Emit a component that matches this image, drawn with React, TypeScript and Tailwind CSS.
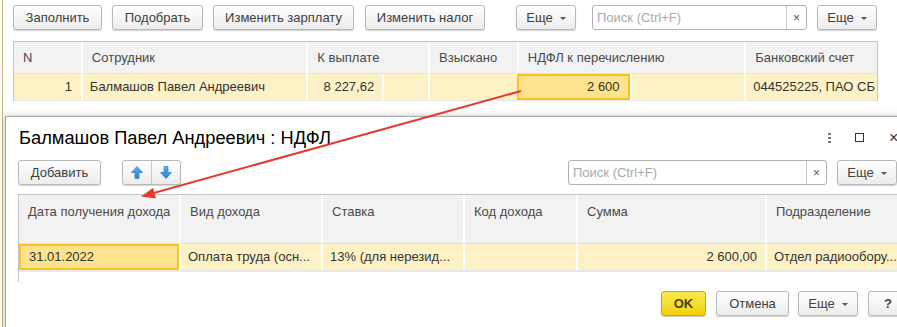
import React from "react";

const F = { fontFamily: '"Liberation Sans", Arial, sans-serif' };

function Btn({ children, className = "" }: { children: React.ReactNode; className?: string }) {
  return (
    <div
      className={
        "h-[25px] flex items-center justify-center rounded-[3px] border border-[#b8b8b8] bg-gradient-to-b from-white to-[#ececec] shadow-[0_1px_1px_rgba(0,0,0,0.18)] text-[13px] text-[#404040] " +
        className
      }
    >
      {children}
    </div>
  );
}

function More({ className = "" }: { className?: string }) {
  return (
    <Btn className={"gap-[7px] " + className}>
      <span>Еще</span>
      <span className="w-0 h-0 border-l-[3px] border-r-[3px] border-t-[3px] border-l-transparent border-r-transparent border-t-[#555] mt-[1px]" />
    </Btn>
  );
}

function Search({ className = "" }: { className?: string }) {
  return (
    <div className={"h-[25px] flex rounded-[3px] border border-[#b0b0b0] bg-white " + className}>
      <div className="flex-1 flex items-center pl-[4px] text-[13px] text-[#a8a8a8]">Поиск (Ctrl+F)</div>
      <div className="w-[20px] border-l border-[#c8c8c8] flex items-center justify-center text-[12px] text-[#555]">×</div>
    </div>
  );
}

function Arrow({ up }: { up?: boolean }) {
  return (
    <svg width="12" height="13" viewBox="0 0 12 13">
      <defs>
        <linearGradient id={up ? "gu" : "gd"} x1="0" y1="0" x2="0" y2="1">
          <stop offset="0" stopColor="#5fb0ee" />
          <stop offset="1" stopColor="#2b7fcf" />
        </linearGradient>
      </defs>
      <polygon
        points={up ? "6,0.5 11.5,6.5 8,6.5 8,12.5 4,12.5 4,6.5 0.5,6.5" : "6,12.5 11.5,6.5 8,6.5 8,0.5 4,0.5 4,6.5 0.5,6.5"}
        fill={`url(#${up ? "gu" : "gd"})`}
        stroke="#2a6fb5"
        strokeWidth="0.6"
      />
    </svg>
  );
}

export default function App() {
  return (
    <div className="relative w-[897px] h-[327px] overflow-hidden bg-white flex" style={F}>
      <div className="w-[2px] shrink-0" />
      <div className="w-px shrink-0 bg-[#c9b378]" />
      {/* background form */}
      <div className="flex-1 pl-[10px] pt-[5px]">
        <div className="flex items-center">
          <Btn className="w-[89px]">Заполнить</Btn>
          <Btn className="w-[91px] ml-[10px]">Подобрать</Btn>
          <Btn className="w-[141px] ml-[10px]">Изменить зарплату</Btn>
          <Btn className="w-[120px] ml-[11px]">Изменить налог</Btn>
          <More className="w-[60px] ml-[31px]" />
          <Search className="w-[215px] ml-[16px]" />
          <More className="w-[60px] ml-[10px]" />
        </div>
        <div className="mt-[11px] w-[865px] border-l border-r border-t border-[#c4c4c4] text-[13px]">
          <div className="flex h-[31px] bg-[#f2f2f2] text-[#4a4a4a]">
            {[
              ["N", 67],
              ["Сотрудник", 226],
              ["К выплате", 122],
              ["Взыскано", 89],
              ["НДФЛ к перечислению", 228],
              ["Банковский счет", 133],
            ].map(([t, w], i) => (
              <div
                key={i}
                className={"flex items-center pl-[9px] whitespace-nowrap overflow-hidden " + (i > 0 ? "border-l-2 border-white" : "")}
                style={{ width: w as number }}
              >
                {t}
              </div>
            ))}
          </div>
          <div className="flex h-[28px] text-[#333] border-t border-[#e4e4e4] border-b border-b-[#e4e4e4]">
            <div className="w-[67px] bg-[#fdf2c6] flex items-center justify-end pr-[9px]">1</div>
            <div className="w-[226px] bg-[#fdf2c6] border-l-2 border-white flex items-center pl-[7px]">Балмашов Павел Андреевич</div>
            <div className="w-[76px] bg-[#fdf2c6] border-l-2 border-white flex items-center justify-end pr-[8px]">8 227,62</div>
            <div className="w-[46px] bg-[#fdf2c6] border-l-2 border-white" />
            <div className="w-[89px] bg-[#fdf2c6] border-l-2 border-white" />
            <div className="w-[113px] bg-[#fde38d] border-2 border-[#f7c51e] flex items-center justify-end pr-[8px]">2 600</div>
            <div className="w-[115px] bg-[#fdf2c6] border-l-2 border-white" />
            <div className="w-[133px] bg-[#fdf2c6] border-l-2 border-white flex items-center pl-[7px] whitespace-nowrap overflow-hidden">044525225, ПАО СБ</div>
          </div>
        </div>
      </div>

      {/* dialog window */}
      <div className="absolute left-[5px] top-[116px] w-[920px] h-[240px] bg-white border border-[#a8a8a8] shadow-[0_0_6px_rgba(0,0,0,0.25)] flex flex-col">
        <div className="flex items-center h-[36px] pt-[5px]">
          <div className="pl-[13px] text-[18.3px] text-black whitespace-nowrap">Балмашов Павел Андреевич : НДФЛ</div>
          <div className="flex-1" />
          <div className="flex flex-col gap-[2px] mr-[24px]">
            <span className="w-[3px] h-[2px] bg-[#777]" />
            <span className="w-[3px] h-[2px] bg-[#777]" />
            <span className="w-[3px] h-[2px] bg-[#777]" />
          </div>
          <div className="w-[9px] h-[9px] border border-[#333] mr-[25px]" />
          <div className="text-[16px] text-[#333] w-[35px]">×</div>
        </div>
        <div className="flex items-center mt-[7px] pl-[12px]">
          <Btn className="w-[83px]">Добавить</Btn>
          <div className="ml-[21px] h-[25px] w-[59px] flex rounded-[3px] border border-[#b8b8b8] bg-gradient-to-b from-white to-[#ececec] shadow-[0_1px_1px_rgba(0,0,0,0.18)]">
            <div className="flex-1 flex items-center justify-center border-r border-[#c8c8c8]">
              <Arrow up />
            </div>
            <div className="flex-1 flex items-center justify-center">
              <Arrow />
            </div>
          </div>
          <Search className="w-[259px] ml-[387px]" />
          <More className="w-[60px] ml-[10px]" />
        </div>
        <div className="ml-[12px] mt-[9px] w-[900px] h-[88px] border-l border-t border-[#c4c4c4] text-[13px]">
          <div className="flex h-[48px] bg-[#f2f2f2] text-[#4a4a4a]">
            {[
              ["Дата получения дохода", 160],
              ["Вид дохода", 142],
              ["Ставка", 142],
              ["Код дохода", 113],
              ["Сумма", 189],
              ["Подразделение", 150],
            ].map(([t, w], i) => (
              <div
                key={i}
                className={"pt-[7px] pl-[9px] whitespace-nowrap overflow-hidden " + (i > 0 ? "border-l-2 border-white" : "")}
                style={{ width: w as number }}
              >
                {t}
              </div>
            ))}
          </div>
          <div className="flex h-[29px] text-[#333] border-t border-[#e0e0e0] border-b-2 border-b-[#e8e8e8]">
            <div className="w-[160px] bg-[#fde38d] border-2 border-[#f7c51e] flex items-center pl-[8px]">31.01.2022</div>
            <div className="w-[142px] bg-[#fdf2c6] border-l-2 border-white flex items-center pl-[7px] whitespace-nowrap">Оплата труда (осн...</div>
            <div className="w-[142px] bg-[#fdf2c6] border-l-2 border-white flex items-center pl-[7px] whitespace-nowrap">13% (для нерезид...</div>
            <div className="w-[113px] bg-[#fdf2c6] border-l-2 border-white" />
            <div className="w-[189px] bg-[#fdf2c6] border-l-2 border-white flex items-center justify-end pr-[8px]">2 600,00</div>
            <div className="w-[150px] bg-[#fdf2c6] border-l-2 border-white flex items-center pl-[7px] whitespace-nowrap">Отдел радиообору...</div>
          </div>
        </div>
        <div className="flex items-center mt-[9px] pl-[655px]">
          <div className="w-[45px] h-[25px] flex items-center justify-center rounded-[3px] border border-[#c9aa00] bg-gradient-to-b from-[#fbe84a] to-[#f2d200] shadow-[0_1px_1px_rgba(0,0,0,0.2)] text-[13px] font-bold text-[#4a4000]">
            OK
          </div>
          <Btn className="w-[73px] ml-[10px]">Отмена</Btn>
          <More className="w-[60px] ml-[9px]" />
          <Btn className="w-[40px] ml-[10px] font-bold">?</Btn>
        </div>
      </div>

      {/* red arrow annotation */}
      <svg className="absolute left-0 top-0 pointer-events-none" width="897" height="327">
        <line x1="521" y1="91" x2="150" y2="194" stroke="#e5392d" strokeWidth="2" />
        <polygon points="141,196.5 153,188 156,198.5" fill="#e5392d" />
      </svg>
    </div>
  );
}
